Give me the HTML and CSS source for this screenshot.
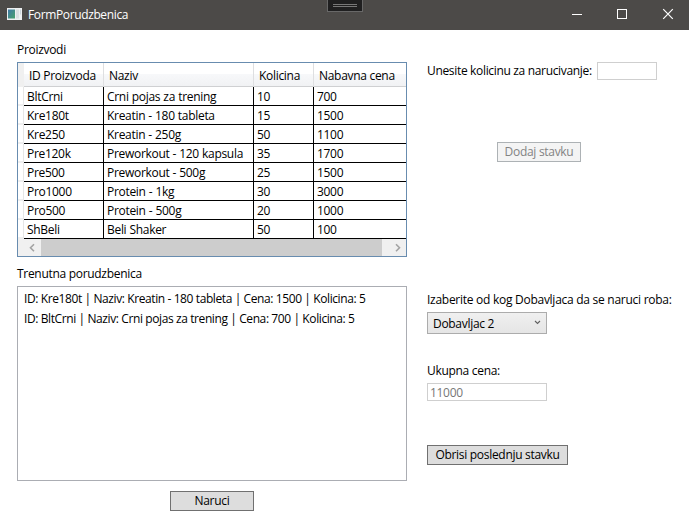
FILE: index.html
```
<!DOCTYPE html>
<html lang="sr-Latn">
<head>
<meta charset="utf-8">
<title>FormPorudzbenica</title>
<link rel="stylesheet" href="styles.css">
</head>
<body>
<header class="titlebar">
  <svg class="app-icon" width="15" height="12" viewBox="0 0 15 12">
    <defs><linearGradient id="g" x1="0" y1="0" x2="1" y2="1"><stop offset="0" stop-color="#3f78a8"/><stop offset="1" stop-color="#49a26b"/></linearGradient></defs>
    <rect width="15" height="12" fill="#eef0f2"/>
    <rect x="1" y="1.500" width="7" height="9" fill="url(#g)"/>
    <rect x="9" y="1.500" width="3" height="9" fill="#dadfe2"/>
    <rect x="13" y="1.500" width="1" height="5" fill="#cdd6dc"/>
  </svg>
  <span class="title">FormPorudzbenica</span>
  <div class="grip"></div>
  <svg class="controls" width="138" height="30" viewBox="0 0 138 30" fill="none" stroke="#fff">
    <path d="M21 14.500h10"/>
    <rect x="66.500" y="9.500" width="9" height="9"/>
    <path d="M112.200 9.200l9.600 9.600M121.800 9.200l-9.600 9.600" stroke-width="1.200"/>
  </svg>
</header>
<main class="form">
  <section class="left">
    <div class="label label-products">Proizvodi</div>
    <div class="datagrid">
      <div class="row head"><i></i><b class="h-id">ID Proizvoda</b><b>Naziv</b><b>Kolicina</b><b class="h-price">Nabavna cena</b></div>
      <div class="row"><i></i><span>BltCrni</span><span>Crni pojas za trening</span><span>10</span><span>700</span></div>
      <div class="row"><i></i><span>Kre180t</span><span>Kreatin - 180 tableta</span><span>15</span><span>1500</span></div>
      <div class="row"><i></i><span>Kre250</span><span>Kreatin - 250g</span><span>50</span><span>1100</span></div>
      <div class="row"><i></i><span>Pre120k</span><span>Preworkout - 120 kapsula</span><span>35</span><span>1700</span></div>
      <div class="row"><i></i><span>Pre500</span><span>Preworkout - 500g</span><span>25</span><span>1500</span></div>
      <div class="row"><i></i><span>Pro1000</span><span>Protein - 1kg</span><span>30</span><span>3000</span></div>
      <div class="row"><i></i><span>Pro500</span><span>Protein - 500g</span><span>20</span><span>1000</span></div>
      <div class="row"><i></i><span>ShBeli</span><span>Beli Shaker</span><span>50</span><span>100</span></div>
      <div class="scrollbar">
        <svg width="23" height="17" fill="none" stroke="#a3a3a3" stroke-width="1.600"><path d="M16 5.200l-3.500 3.500 3.500 3.500"/></svg>
        <div class="thumb"></div>
        <svg width="24" height="17" fill="none" stroke="#a3a3a3" stroke-width="1.600"><path d="M14 5.200l3.500 3.500-3.500 3.500"/></svg>
      </div>
    </div>
    <div class="label label-order">Trenutna porudzbenica</div>
    <div class="listbox">
      <div class="item">ID: Kre180t | Naziv: Kreatin - 180 tableta | Cena: 1500 | Kolicina: 5</div>
      <div class="item">ID: BltCrni | Naziv: Crni pojas za trening | Cena: 700 | Kolicina: 5</div>
    </div>
    <button class="btn btn-order">Naruci</button>
  </section>
  <section class="right">
    <div class="qty"><label class="label label-qty">Unesite kolicinu za narucivanje:</label><div class="box box-qty"></div></div>
    <button class="btn btn-add" disabled>Dodaj stavku</button>
    <div class="label label-supplier">Izaberite od kog Dobavljaca da se naruci roba:</div>
    <div class="combo"><span>Dobavljac 2</span><svg width="7" height="5" viewBox="0 0 7 5" fill="none" stroke="#606060" stroke-width="1.100"><path d="M1 1l2.500 2.500L6 1"/></svg></div>
    <div class="label label-total">Ukupna cena:</div>
    <div class="box box-total">11000</div>
    <button class="btn btn-delete">Obrisi poslednju stavku</button>
  </section>
</main>
</body>
</html>
```
FILE: styles.css
```
* { box-sizing: border-box; }
body {
  margin: 0;
  width: 689px;
  height: 526px;
  overflow: hidden;
  background: #fff;
  color: #000;
  font: 12px/16px "Open Sans", "Noto Sans", sans-serif;
  letter-spacing: -0.3px;
  white-space: nowrap;
}
.titlebar {
  position: relative;
  display: flex;
  align-items: center;
  height: 30px;
  padding-left: 7px;
  background: #4c4a48;
  color: #fff;
}
.app-icon { margin-top: -2px; }
.title { margin-left: 6px; letter-spacing: -0.37px; }
.controls { margin-left: auto; }
.grip {
  position: absolute;
  left: 327px;
  top: 0;
  width: 36px;
  height: 12px;
  border: 1px solid #686868;
  border-top: 0;
  background: linear-gradient(#777, #777) 5px 4px / 24px 1px no-repeat,
    linear-gradient(#777, #777) 5px 6px / 24px 1px no-repeat, #1f1f20;
}
.form { display: grid; grid-template-columns: 390px 250px; column-gap: 20px; padding: 12px 0 0 17px; }
.left, .right { display: flex; flex-direction: column; align-items: flex-start; }
.label { height: 16px; }
.label-products { margin-bottom: 4px; }
.datagrid { width: 390px; height: 195px; border: 1px solid #688caf; background: #f0f0f0; }
.row { display: grid; grid-template: 100% / 6px 80px 150px 60px 92px; height: 19px; }
.row i { background: #fff; border-right: 1px solid #e6e6e6; border-bottom: 2px solid #efefef; }
.row span { padding-left: 3px; line-height: 19px; word-spacing: 0.3px; background: #fff; border-right: 1px solid #000; border-bottom: 1px solid #000; }
.row span:last-child { border-right: 0; }
.row.head { height: 24px; }
.head i { background: #f0f0f0; border: 0; }
.head b {
  padding-left: 5px;
  font-weight: 400;
  line-height: 26px;
  background: linear-gradient(#fff 0 50%, #f7f8fa 50%, #f1f2f4);
  border-right: 1px solid #dedfe1;
  border-bottom: 1px solid #cfd0d2;
}
.head b:last-child { border-right: 0; }
.scrollbar { display: flex; height: 17px; }
.thumb { flex: 1; background: #cdcdcd; }
.label-order { margin: 9px 0 4px; }
.listbox { width: 390px; height: 195px; border: 1px solid #abadb3; padding: 2px 6px; letter-spacing: -0.4px; }
.item { height: 20px; line-height: 20px; }
.btn {
  height: 20px;
  padding: 0;
  border: 1px solid #707070;
  border-radius: 0;
  background: #ddd;
  color: #000;
  font: inherit;
  line-height: 18px;
  letter-spacing: inherit;
  text-align: center;
}
.btn-order { width: 84px; margin: 10px 0 0 153px; }
.qty { display: flex; width: 230px; height: 18px; margin-top: 20px; justify-content: space-between; }
.label-qty { margin-top: 1px; letter-spacing: -0.33px; }
.box { border: 1px solid #cfcfcf; height: 18px; }
.box-qty { width: 60px; }
.btn-add { width: 84px; margin: 62px 0 0 70px; background: #f4f4f4; border-color: #adb2b5; color: #838383; }
.label-supplier { margin-top: 130px; letter-spacing: -0.27px; }
.combo {
  display: flex;
  align-items: center;
  justify-content: space-between;
  width: 120px;
  height: 22px;
  margin-top: 4px;
  padding: 0 5px;
  border: 1px solid #acacac;
  background: linear-gradient(#f0f0f0, #e5e5e5);
}
.combo span { margin-top: 1px; }
.combo svg { margin-top: -2px; }
.label-total { margin-top: 29px; }
.box-total { width: 120px; margin-top: 4px; padding-left: 2px; line-height: 17px; color: #777; }
.btn-delete { width: 141px; margin-top: 44px; }
```
